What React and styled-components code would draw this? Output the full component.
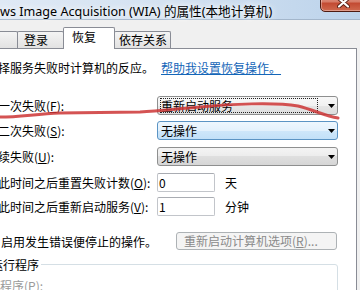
import React from "react";
import styled, { createGlobalStyle } from "styled-components";

const GlobalStyle = createGlobalStyle`
  html, body {
    margin: 0;
    padding: 0;
    background: #f0f0f0;
  }
  body {
    font-family: "Noto Sans CJK SC", "Liberation Sans", sans-serif;
    font-size: 12px;
    color: #000;
  }
`;

const Window = styled.div`
  position: relative;
  width: 360px;
  height: 290px;
  overflow: hidden;
  display: flex;
  flex-direction: column;
  background: #f0f0f0;
`;

const TitleBar = styled.div`
  display: flex;
  align-items: flex-start;
  justify-content: space-between;
  flex-shrink: 0;
  height: 20px;
  box-sizing: border-box;
  background: linear-gradient(90deg, #dfe9f5 0%, #d4e2f1 45%, #bcd3eb 100%);
  border-bottom: 1px solid #a3b6cb;
`;

const TitleText = styled.div`
  font-family: "Noto Sans", "Noto Sans CJK SC", sans-serif;
  font-size: 12.6px;
  line-height: 18px;
  margin-top: 3px;
  white-space: nowrap;
  text-shadow: 0 0 6px #fff, 0 0 10px #fff;
`;

const CloseButton = styled.div`
  flex-shrink: 0;
  width: 46px;
  height: 19px;
  margin-top: -7px;
  margin-right: -6px;
  box-sizing: border-box;
  border: 1px solid #4f1b11;
  border-radius: 0 0 5px 5px;
  background: linear-gradient(#e9a898 0%, #d67c68 45%, #c34b33 55%, #cf6a4f 100%);
  box-shadow: inset 0 0 0 1px rgba(255, 255, 255, 0.35);
  display: flex;
  align-items: center;
  justify-content: center;
`;

const Client = styled.div`
  flex: 1;
  display: flex;
  flex-direction: column;
  padding-top: 7px;
`;

const TabStrip = styled.div`
  display: flex;
  align-items: flex-end;
  height: 21px;
  margin-left: -30px;
  flex-shrink: 0;
`;

const Tab = styled.div`
  position: relative;
  box-sizing: border-box;
  width: ${(p) => p.$width}px;
  height: ${(p) => (p.$active ? 22 : 17)}px;
  margin-left: ${(p) => (p.$first ? 0 : -1)}px;
  margin-bottom: ${(p) => (p.$active ? -1 : 0)}px;
  padding: ${(p) => (p.$active ? 1 : 0)}px 0 0 ${(p) => p.$pad || 6}px;
  border: 1px solid #898c95;
  border-bottom: none;
  border-radius: 2px 2px 0 0;
  background: ${(p) =>
    p.$active ? "#fff" : "linear-gradient(#f4f4f4, #ebebeb 50%, #e2e2e2)"};
  z-index: ${(p) => (p.$active ? 2 : 1)};
  line-height: 16px;
  white-space: nowrap;
  overflow: hidden;
`;

const Panel = styled.div`
  flex: 1;
  display: flex;
  flex-direction: column;
  margin: 0 3px -10px -20px;
  padding: 11px 18px 0 5px;
  background: #fff;
  border: 1px solid #898c95;
`;

const Intro = styled.div`
  display: flex;
  line-height: 16px;
  white-space: nowrap;
`;

const HelpLink = styled.span`
  margin-left: 7px;
  color: #1466b8;
  text-decoration: underline;
`;

const FieldRow = styled.div`
  display: grid;
  grid-template-columns: 171px ${(p) => p.$control || "1fr"} auto;
  align-items: center;
  height: 19px;
  margin-top: ${(p) => p.$top}px;
`;

const Label = styled.span`
  line-height: 15px;
  white-space: nowrap;
  color: ${(p) => (p.$disabled ? "#9a9a9a" : "#000")};
`;

const Combo = styled.div`
  display: flex;
  align-items: center;
  height: 19px;
  box-sizing: border-box;
  padding: 0 2px 0 2px;
  border: 1px solid ${(p) => (p.$hover ? "#5b94c4" : "#8e8f8f")};
  border-radius: 3px;
  background: ${(p) =>
    p.$hover
      ? "linear-gradient(#eef7fe, #e3f1fc 50%, #cfe7fa 50%, #c2e0f8)"
      : p.$focus
      ? "linear-gradient(#f8f8f8, #f1f1f1 50%, #e6e6e6 50%, #dedede)"
      : "linear-gradient(#f4f4f4, #ececec 50%, #dfdfdf 50%, #d6d6d6)"};
`;

const ComboValue = styled.span`
  flex: 1;
  height: 15px;
  box-sizing: border-box;
  border: 1px dotted ${(p) => (p.$focus ? "#222" : "transparent")};
  line-height: 13px;
  white-space: nowrap;
  overflow: hidden;
`;

const Arrow = styled.svg`
  flex-shrink: 0;
  margin-left: 10px;
`;

const TextBox = styled.div`
  height: 19px;
  box-sizing: border-box;
  padding-left: 1px;
  border: 1px solid #c2c5ca;
  border-top-color: #a9acb2;
  border-radius: 2px;
  background: #fff;
  line-height: 17px;
`;

const Unit = styled.span`
  padding-left: 10px;
  line-height: 15px;
`;

const CheckRow = styled.div`
  display: flex;
  align-items: center;
  height: 18px;
  margin-top: 16px;
`;

const CheckBox = styled.span`
  flex-shrink: 0;
  width: 13px;
  height: 13px;
  box-sizing: border-box;
  border: 1px solid #8f8f8f;
  background: linear-gradient(135deg, #dcdcdc, #fff);
`;

const CheckLabel = styled.span`
  margin-left: 2px;
  line-height: 15px;
  white-space: nowrap;
`;

const DisabledButton = styled.div`
  margin-left: auto;
  margin-right: 1px;
  width: 161px;
  height: 18px;
  box-sizing: border-box;
  padding-left: 7px;
  border: 1px solid #adb2b5;
  border-radius: 3px;
  background: #f4f4f4;
  color: #8a8a8a;
  line-height: 16px;
  white-space: nowrap;
`;

const Group = styled.fieldset`
  margin: 0;
  margin-top: 7px;
  padding: 0 0 20px 1px;
  border: 1px solid #d5dfe5;
  border-radius: 3px;
  min-width: 0;
`;

const Legend = styled.legend`
  margin-left: 1px;
  padding: 0 2px;
  line-height: 15px;
`;

const GroupBody = styled.div`
  margin-top: 5px;
  padding-left: 12px;
`;

const Scribble = styled.svg`
  position: absolute;
  left: 0;
  top: 0;
  pointer-events: none;
`;

const DropArrow = () => (
  <Arrow width="7" height="4" viewBox="0 0 7 4">
    <path d="M0 0H7L3.5 4Z" fill="#000" />
  </Arrow>
);

const CloseGlyph = () => (
  <svg width="13" height="11" viewBox="0 0 13 11">
    <path d="M2 1.5L11 9.5M11 1.5L2 9.5" stroke="#5a2015" strokeWidth="4" strokeLinecap="round" />
    <path d="M2 1.5L11 9.5M11 1.5L2 9.5" stroke="#fff" strokeWidth="2.2" strokeLinecap="round" />
  </svg>
);

const App = () => {
  return (
    <>
      <GlobalStyle />
      <Window>
        <TitleBar>
          <TitleText>ws Image Acquisition (WIA) 的属性(本地计算机)</TitleText>
          <CloseButton>
            <CloseGlyph />
          </CloseButton>
        </TitleBar>
        <Client>
          <TabStrip>
            <Tab $first $width={48} $pad={4}>常规</Tab>
            <Tab $width={47} $pad={6}>登录</Tab>
            <Tab $active $width={52} $pad={8}>恢复</Tab>
            <Tab $width={57} $pad={4}>依存关系</Tab>
          </TabStrip>
          <Panel>
            <Intro>
              选择服务失败时计算机的反应。
              <HelpLink>帮助我设置恢复操作。</HelpLink>
            </Intro>

            <FieldRow $top={20}>
              <Label>第一次失败(<u>F</u>):</Label>
              <Combo $focus>
                <ComboValue $focus>重新启动服务</ComboValue>
                <DropArrow />
              </Combo>
            </FieldRow>
            <FieldRow $top={6}>
              <Label>第二次失败(<u>S</u>):</Label>
              <Combo $hover>
                <ComboValue>无操作</ComboValue>
                <DropArrow />
              </Combo>
            </FieldRow>
            <FieldRow $top={7}>
              <Label>后续失败(<u>U</u>):</Label>
              <Combo>
                <ComboValue>无操作</ComboValue>
                <DropArrow />
              </Combo>
            </FieldRow>

            <FieldRow $top={7} $control="58px">
              <Label>在此时间之后重置失败计数(<u>O</u>):</Label>
              <TextBox>0</TextBox>
              <Unit>天</Unit>
            </FieldRow>
            <FieldRow $top={5} $control="58px">
              <Label>在此时间之后重新启动服务(<u>V</u>):</Label>
              <TextBox>1</TextBox>
              <Unit>分钟</Unit>
            </FieldRow>

            <CheckRow>
              <CheckBox />
              <CheckLabel>启用发生错误便停止的操作。</CheckLabel>
              <DisabledButton>重新启动计算机选项(<u>R</u>)...</DisabledButton>
            </CheckRow>

            <Group>
              <Legend>运行程序</Legend>
              <GroupBody>
                <Label $disabled>程序(<u>P</u>):</Label>
              </GroupBody>
            </Group>
          </Panel>
        </Client>
        <Scribble width="360" height="290" viewBox="0 0 360 290">
          <path
            d="M0 117 C20 117 35 114 60 113 L140 112 C160 111 175 109 200 107 C230 104 275 102 298 106 C314 110 325 116 338 118"
            stroke="#cc3535"
            strokeOpacity="0.85"
            strokeWidth="3"
            fill="none"
            strokeLinecap="round"
          />
        </Scribble>
      </Window>
    </>
  );
};

export default App;
